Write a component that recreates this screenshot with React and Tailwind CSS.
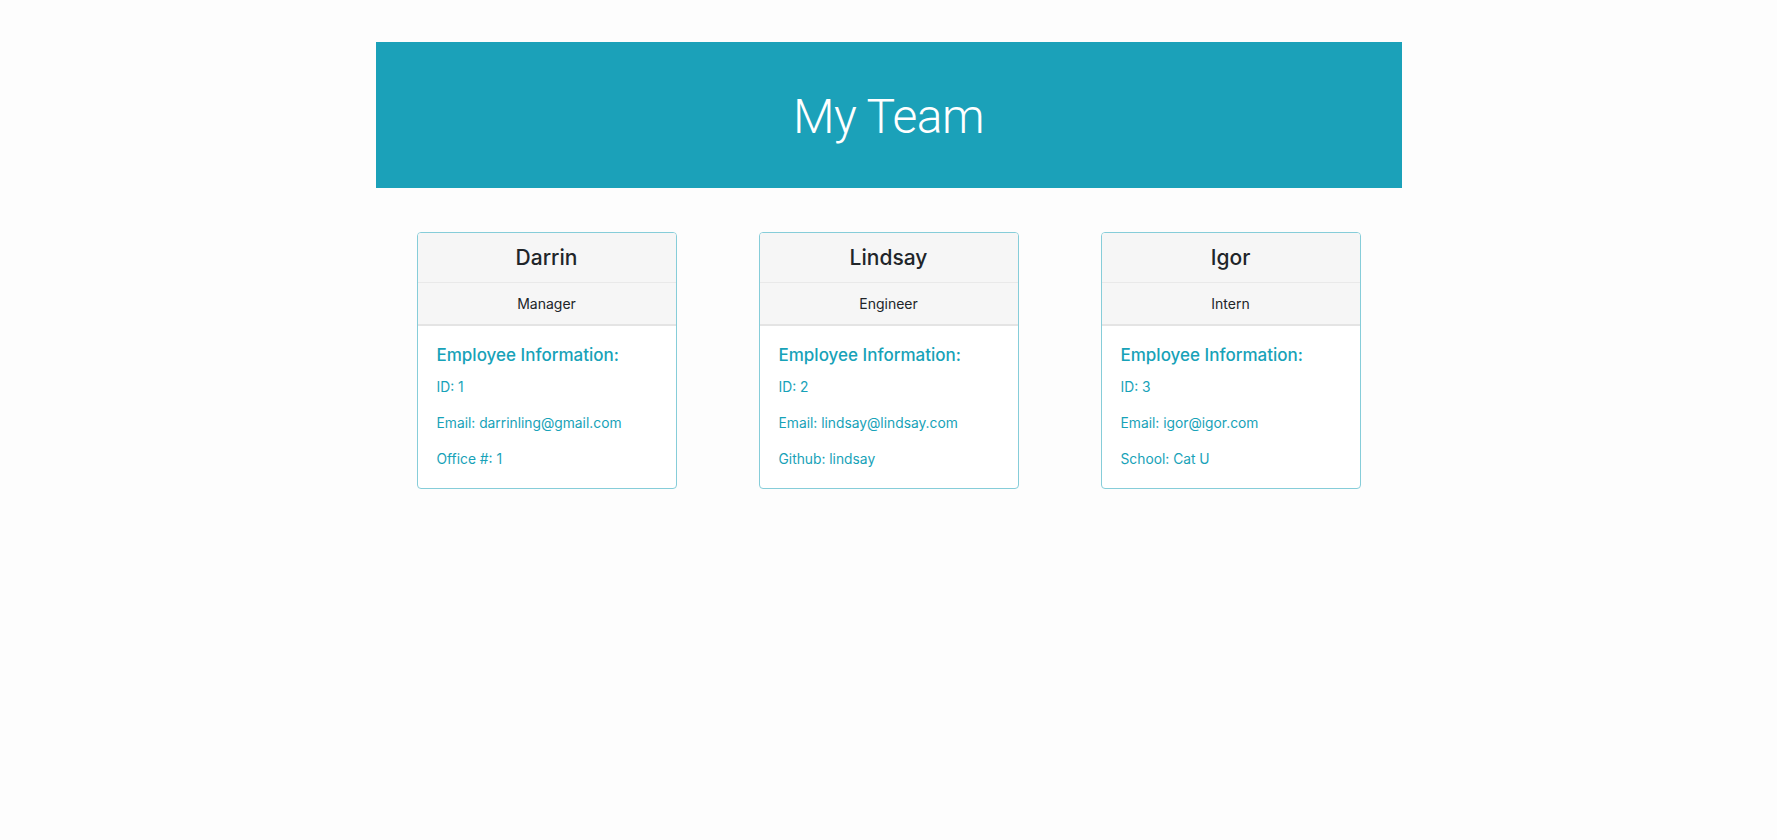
import React from "react";

const team = [
  { name: "Darrin", role: "Manager", id: 1, email: "darrinling@gmail.com", extra: "Office #: 1" },
  { name: "Lindsay", role: "Engineer", id: 2, email: "lindsay@lindsay.com", extra: "Github: lindsay" },
  { name: "Igor", role: "Intern", id: 3, email: "igor@igor.com", extra: "School: Cat U" },
];

const EmployeeCard = ({ employee }) => (
  <div className="w-[260px] mx-auto border border-[#86cdd9] rounded-[4px] overflow-hidden bg-white">
    {/* name */}
    <div className="h-[49px] bg-[#f6f6f6] flex items-center justify-center">
      <h2 className="text-[21px] font-medium text-[#212529]">{employee.name}</h2>
    </div>
    {/* role */}
    <div className="h-[44px] bg-[#f6f6f6] border-t border-[#e9e9e9] border-b-2 border-b-[#e4e4e4] flex items-center justify-center">
      <span className="text-[14px] text-[#212529]">{employee.role}</span>
    </div>
    {/* info */}
    <div className="px-[19px] pt-[18px] pb-[18px] text-[#17a2b8]">
      <h3 className="text-[17px] font-medium leading-[22px] mb-[11px]">Employee Information:</h3>
      <p className="text-[13.8px] leading-[21px] mb-[15px]">ID: {employee.id}</p>
      <p className="text-[13.8px] leading-[21px] mb-[15px]">Email: {employee.email}</p>
      <p className="text-[13.8px] leading-[21px]">{employee.extra}</p>
    </div>
  </div>
);

const App = () => {
  return (
    <div className="min-h-screen bg-[#fdfdfd] pt-[42px] font-['Inter','Noto_Sans',sans-serif]">
      <header className="w-[1026px] h-[146px] mx-auto bg-[#1ba1b9] flex items-center justify-center pt-[4px]">
        <h1 className="text-[48px] font-light text-white font-['Roboto','Helvetica_Neue',sans-serif] tracking-[-0.5px]">
          My Team
        </h1>
      </header>
      <main className="w-[1026px] mx-auto mt-[44px] grid grid-cols-3">
        {team.map((employee) => (
          <EmployeeCard key={employee.id} employee={employee} />
        ))}
      </main>
    </div>
  );
};

export default App;
